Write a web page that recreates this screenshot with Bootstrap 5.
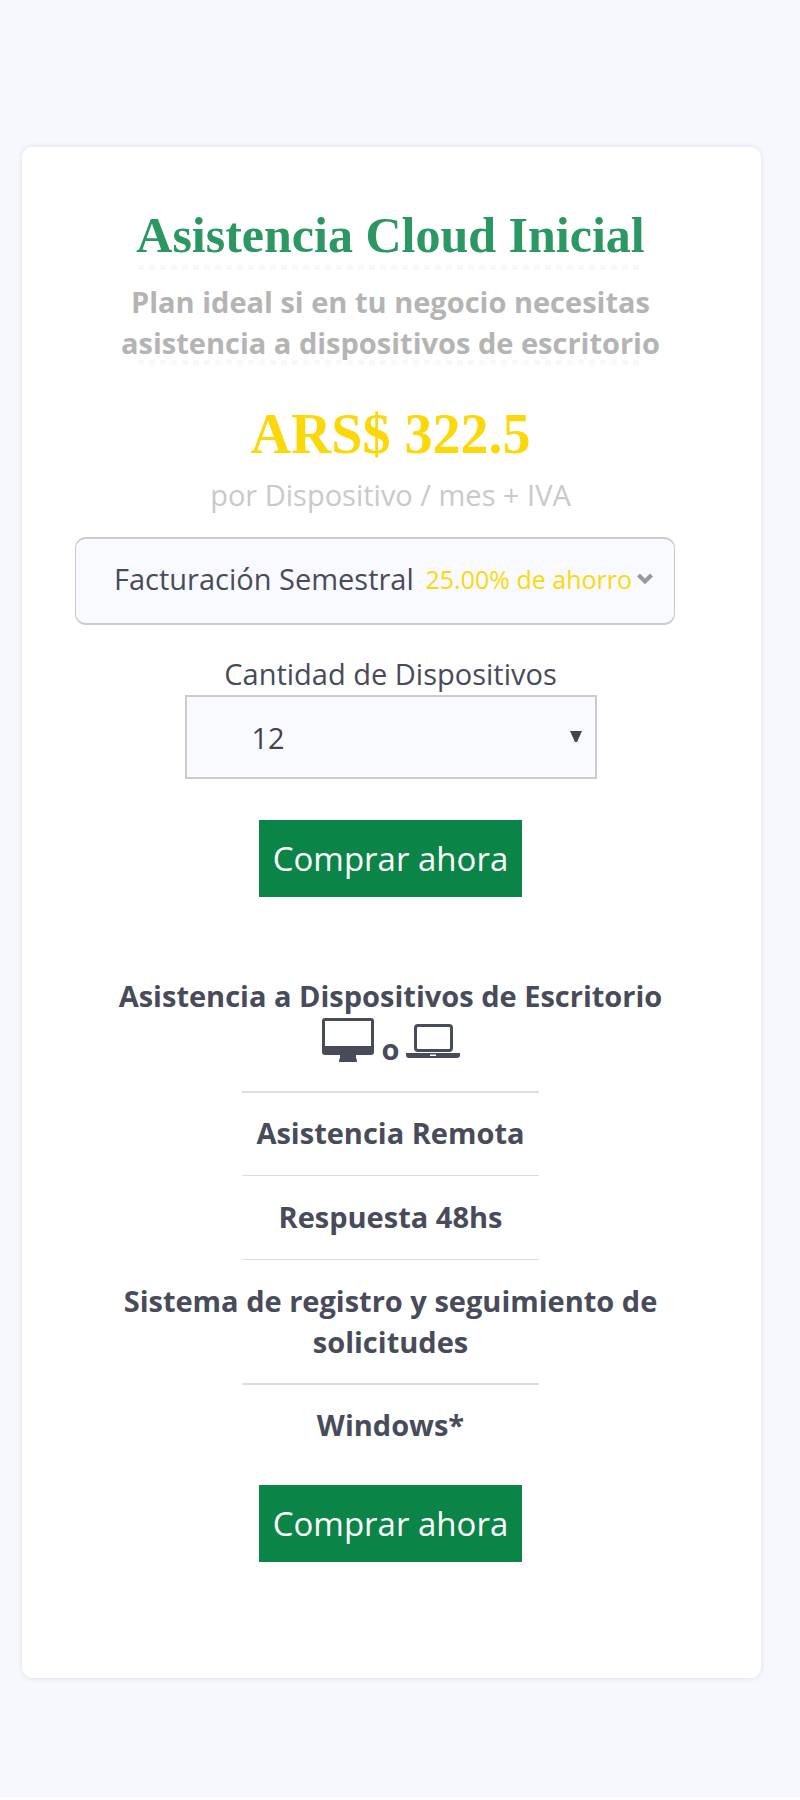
<!DOCTYPE html>
<html lang="es">
<head>
<meta charset="utf-8">
<meta name="viewport" content="width=device-width, initial-scale=1">
<title>Asistencia Cloud Inicial</title>
<link rel="stylesheet" href="https://cdn.jsdelivr.net/npm/bootstrap@5.3.0/dist/css/bootstrap.min.css">
<style>
  body { background: #fff; color: #484b59; font-family: "Open Sans", "Noto Sans", sans-serif; font-size: 29px; line-height: 41px; }
  .plan-page { background: #f6f8fd; padding: 147px 39px 119px 22px; margin-bottom: 3px; }
  .plan-card { border: 0; border-radius: 11px; color: inherit; padding: 58px 55px 116px 53px; box-shadow: 0 0 5px 1px rgba(40, 50, 90, .09); }
  .plan-title { color: #2b9864; font: bold 50px/60px "Roboto Slab", "Liberation Serif", serif; }
  .plan-price { color: #fcd80a; font: bold 56px/60px "Roboto Slab", "Liberation Serif", serif; margin-top: 39px; }
  .dots { width: 506px; max-width: 100%; height: 5px; background: repeating-linear-gradient(90deg, #f6f9f8 0 6px, #fff 6px 11px); }
  .plan-lead { color: #b4b4b4; font-weight: 700; margin-top: 11px; }
  .dots-under { margin-top: -3px; }
  .per-device { color: #c9c9c9; margin: 10px 0 22px; }
  .billing { max-width: 600px; height: 88px; border: solid #ccc; border-width: 2px 1px; border-radius: 11px; background: #f9faff; color: #484b59; padding: 0 21px 6px 38px; }
  .saving { color: #fcd80a; font-size: 25px; gap: 5px; padding-top: 2px; }
  .quantity { width: 412px; max-width: 100%; margin-top: 1px; }
  .quantity .form-select { height: 84px; border: 2px solid #ccc; border-radius: 0; background: #f9faff; color: #444; font-size: 29px; line-height: 41px; padding: 0 40px 0 65px; }
  .quantity svg { right: 15px; top: 36px; }
  .buy { background: #0b8448; color: #fff; border: 0; border-radius: 0; font-size: 33px; line-height: 41px; padding: 18px 12px; width: 263px; }
  .buy:hover { background: #09713d; color: #fff; }
  .buy-top { margin-top: 41px; }
  .features { margin: 78px 0 40px; font-weight: 700; }
  .features li + li::before { content: ""; display: block; width: 297px; max-width: 100%; height: 1px; background: #ddd; margin: 22px auto 20px; }
  .features li.rule-strong::before { height: 2px; margin: 21px auto 19px; }
  .devices { height: 54px; gap: 7px; }
  .devices span { padding-top: 12px; }
</style>
</head>
<body>
<main class="plan-page">
  <section class="card plan-card text-center align-items-center">
    <h1 class="plan-title m-0">Asistencia Cloud Inicial</h1>
    <div class="dots"></div>
    <p class="plan-lead mb-0">Plan ideal si en tu negocio necesitas<br>asistencia a dispositivos de escritorio</p>
    <div class="dots dots-under"></div>
    <p class="plan-price mb-0">ARS$ 322.5</p>
    <p class="per-device">por Dispositivo / mes + IVA</p>
    <button type="button" class="billing w-100 align-self-start d-flex align-items-center justify-content-between">
      <span>Facturación Semestral</span>
      <span class="saving d-flex align-items-center">25.00% de ahorro
        <svg width="16" height="12" viewBox="0 0 16 12" fill="none" stroke="#999" stroke-width="4" aria-hidden="true"><path d="M1.5 2 8 8.500 14.500 2"/></svg>
      </span>
    </button>
    <label for="cantidad" class="mt-4 pt-1">Cantidad de Dispositivos</label>
    <div class="quantity position-relative">
      <select id="cantidad" class="form-select">
        <option>12</option>
        <option>24</option>
      </select>
      <svg class="position-absolute pe-none" width="12" height="11" viewBox="0 0 12 11" aria-hidden="true"><path d="M0 0H12L7 11H5Z" fill="#444"/></svg>
    </div>
    <button type="button" class="btn buy buy-top">Comprar ahora</button>
    <ul class="features list-unstyled">
      <li>Asistencia a Dispositivos de Escritorio
        <div class="devices d-flex justify-content-center">
          <svg width="54" height="46" viewBox="0 0 54 46" aria-label="Computadora de escritorio" role="img"><path fill="#484b59" fill-rule="evenodd" d="M4 2H50Q53 2 53 5V36Q53 39 50 39H35V42Q36 43 36 46H18Q18 43 19 42V39H4Q1 39 1 36V5Q1 2 4 2ZM4 5V30H50V5Z"/></svg>
          <span>o</span>
          <svg width="54" height="46" viewBox="0 0 54 46" aria-label="Notebook" role="img"><path fill="#484b59" fill-rule="evenodd" d="M12 8H43Q47 8 47 12V32Q47 36 43 36H12Q8 36 8 32V12Q8 8 12 8ZM12 11Q11 11 11 12V32Q11 33 12 33H43Q44 33 44 32V12Q44 11 43 11ZM0 37H54V39Q54 42 51 42H3Q0 42 0 39ZM24 38.500V40H30V38.500Z"/></svg>
        </div>
      </li>
      <li class="rule-strong">Asistencia Remota</li>
      <li>Respuesta 48hs</li>
      <li>Sistema de registro y seguimiento de<br>solicitudes</li>
      <li class="rule-strong">Windows*</li>
    </ul>
    <button type="button" class="btn buy">Comprar ahora</button>
  </section>
</main>
<script src="https://cdn.jsdelivr.net/npm/bootstrap@5.3.0/dist/js/bootstrap.bundle.min.js"></script>
</body>
</html>
